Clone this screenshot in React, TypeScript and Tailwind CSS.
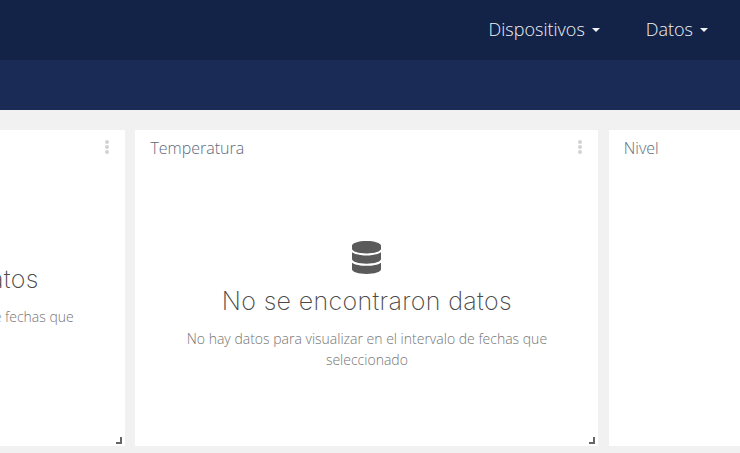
function Card({ title, empty = true }: { title: string; empty?: boolean }) {
    return (
        <div className="relative w-[463px] h-[316px] shrink-0 bg-white">
            <div className="pl-[15px] pt-[7px] text-[16px] leading-[22px] font-light text-[#5c6a7c] font-['Open_Sans',sans-serif]">
                {title}
            </div>
            {/* Menu de puntos */}
            <div className="absolute top-[10px] right-[16px] flex flex-col gap-[1px]">
                <span className="w-[4px] h-[4px] rounded-full bg-[#d2d2d2]" />
                <span className="w-[4px] h-[4px] rounded-full bg-[#d2d2d2]" />
                <span className="w-[4px] h-[4px] rounded-full bg-[#d2d2d2]" />
            </div>
            {empty && (
                <div className="flex flex-col items-center mt-[82px]">
                    <svg className="w-[29px] h-[33px] text-[#5a5a5a]" viewBox="0 0 448 512" fill="currentColor" preserveAspectRatio="none">
                        <path d="M448 73.143v45.714C448 159.143 347.667 192 224 192S0 159.143 0 118.857V73.143C0 32.857 100.333 0 224 0s224 32.857 224 73.143zM448 176v102.857C448 319.143 347.667 352 224 352S0 319.143 0 278.857V176c48.125 33.143 136.208 48.572 224 48.572S399.874 209.143 448 176zm0 160v102.857C448 479.143 347.667 512 224 512S0 479.143 0 438.857V336c48.125 33.143 136.208 48.572 224 48.572S399.874 369.143 448 336z" />
                    </svg>
                    <div className="mt-[10px] text-[25px] leading-[34px] font-extralight text-[#4a4a4a] tracking-[0.35px] font-['Inter',sans-serif]">
                        No se encontraron datos
                    </div>
                    <p className="mt-[10px] w-[380px] text-center text-[14px] leading-[21px] font-light text-[#757575] font-['Open_Sans',sans-serif]">
                        No hay datos para visualizar en el intervalo de fechas que seleccionado
                    </p>
                </div>
            )}
            {/* Asa de redimensionar */}
            <div className="absolute right-[3px] bottom-[2px] w-[6px] h-[7px]">
                <div className="absolute right-0 top-0 w-[2px] h-full bg-[#666666]" />
                <div className="absolute left-0 bottom-0 w-full h-[2px] bg-[#666666]" />
            </div>
        </div>
    );
}

export default function App() {
    return (
        <div className="w-[740px] h-[453px] overflow-hidden bg-[#f1f1f1] font-['Open_Sans',sans-serif]">
            <nav className="h-[60px] pb-[1px] bg-[#132347] flex items-center justify-end pr-[32px] gap-[46px] text-[18px] font-light text-[#f0f1f4]">
                <div className="flex items-center gap-[7px]">
                    Dispositivos
                    <span className="w-0 h-0 border-x-[4px] border-x-transparent border-t-[4px] border-t-[#f0f1f4]" />
                </div>
                <div className="flex items-center gap-[7px]">
                    Datos
                    <span className="w-0 h-0 border-x-[4px] border-x-transparent border-t-[4px] border-t-[#f0f1f4]" />
                </div>
            </nav>
            <div className="h-[50px] bg-[#1a2c56]" />
            <div className="flex gap-[10.4px] mt-[20px] ml-[-338px]">
                <Card title="" />
                <Card title="Temperatura" />
                <Card title="Nivel" empty={false} />
            </div>
        </div>
    );
}
